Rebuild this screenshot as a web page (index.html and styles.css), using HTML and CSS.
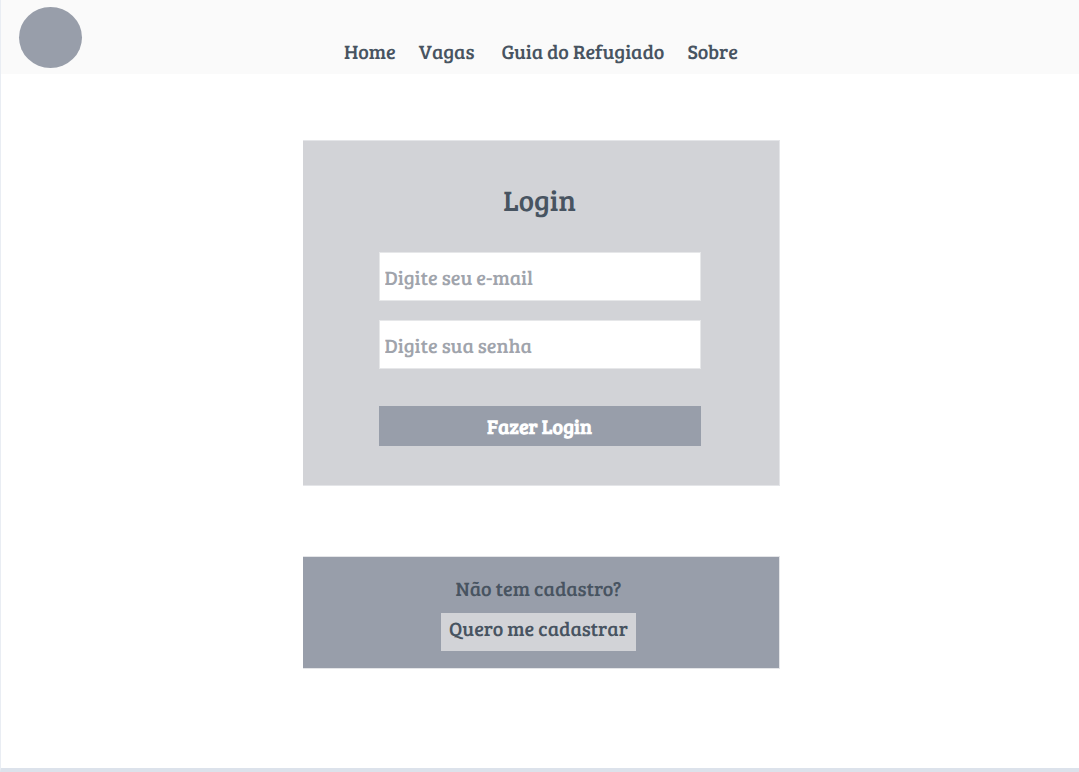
FILE: index.html
```html
<!DOCTYPE html>
<html lang="pt-BR">
<head>
<meta charset="utf-8">
<meta name="viewport" content="width=device-width, initial-scale=1">
<title>Login</title>
<link rel="stylesheet" href="styles.css">
</head>
<body class="page">
  <header class="header">
    <div class="logo"></div>
    <nav class="nav">
      <a class="nav-link" href="#">Home</a>
      <a class="nav-link" href="#">Vagas</a>
      <a class="nav-link nav-guide" href="#">Guia do Refugiado</a>
      <a class="nav-link" href="#">Sobre</a>
    </nav>
  </header>
  <main class="main">
    <form class="login">
      <h1 class="title">Login</h1>
      <input class="field" type="email" placeholder="Digite seu e-mail" aria-label="Digite seu e-mail">
      <input class="field" type="password" placeholder="Digite sua senha" aria-label="Digite sua senha">
      <button class="submit" type="submit">Fazer Login</button>
    </form>
    <section class="signup">
      <p class="question">Não tem cadastro?</p>
      <button class="register" type="button">Quero me cadastrar</button>
    </section>
  </main>
</body>
</html>
```
FILE: styles.css
```css
* {
  box-sizing: border-box;
}

.page {
  display: flex;
  flex-direction: column;
  min-height: 100vh;
  margin: 0;
  border-left: 1px solid #e9edf3;
  border-bottom: 4px solid #dce2eb;
  background: #fff;
  color: #485461;
  font-family: "Bree Serif", "DejaVu Serif Condensed", "DejaVu Serif", serif;
  font-size: 20px;
  line-height: 24px;
  text-rendering: geometricPrecision;
}

.header {
  display: grid;
  grid-template-columns: 1fr auto 1fr;
  padding: 7px 16px 6px 18px;
  background: #fafafa;
}

.logo {
  width: 63px;
  height: 61px;
  border-radius: 50%;
  background: #989eaa;
}

.nav {
  display: flex;
  align-self: end;
  gap: 23px;
  padding-bottom: 5px;
}

.nav-link {
  color: inherit;
  text-decoration: none;
}

.nav-guide {
  margin-left: 4px;
}

.main {
  display: flex;
  flex-direction: column;
  align-items: center;
  gap: 70px;
  padding: 66px 16px 66px 18px;
}

.login,
.signup {
  display: flex;
  flex-direction: column;
  width: 100%;
  max-width: 477px;
  border: 1px solid #e4e5e8;
  border-left: 0;
}

.login {
  padding: 44px 78px 39px 76px;
  background: #d2d3d7;
}

.title {
  margin: 0 0 35px;
  font-size: 29px;
  font-weight: 400;
  line-height: 32px;
  text-align: center;
}

.field {
  width: 100%;
  height: 49px;
  margin: 0 0 19px;
  padding: 0 5px;
  border: 1px solid #e6e7e9;
  border-radius: 0;
  background: #fff;
  color: #485461;
  font: inherit;
  text-rendering: inherit;
}

.field::placeholder {
  color: #a0a4ac;
  opacity: 1;
}

.submit {
  height: 40px;
  margin-top: 18px;
  padding: 0;
  border: 0;
  background: #989eaa;
  color: #fff;
  font: inherit;
  font-weight: 700;
  text-rendering: inherit;
}

.signup {
  align-items: center;
  padding: 19px 20px 17px 16px;
  background: #989eaa;
}

.question {
  margin: 0 0 13px;
}

.register {
  padding: 3px 8px 11px;
  border: 0;
  background: #d2d3d7;
  color: inherit;
  font: inherit;
  text-rendering: inherit;
}
```
